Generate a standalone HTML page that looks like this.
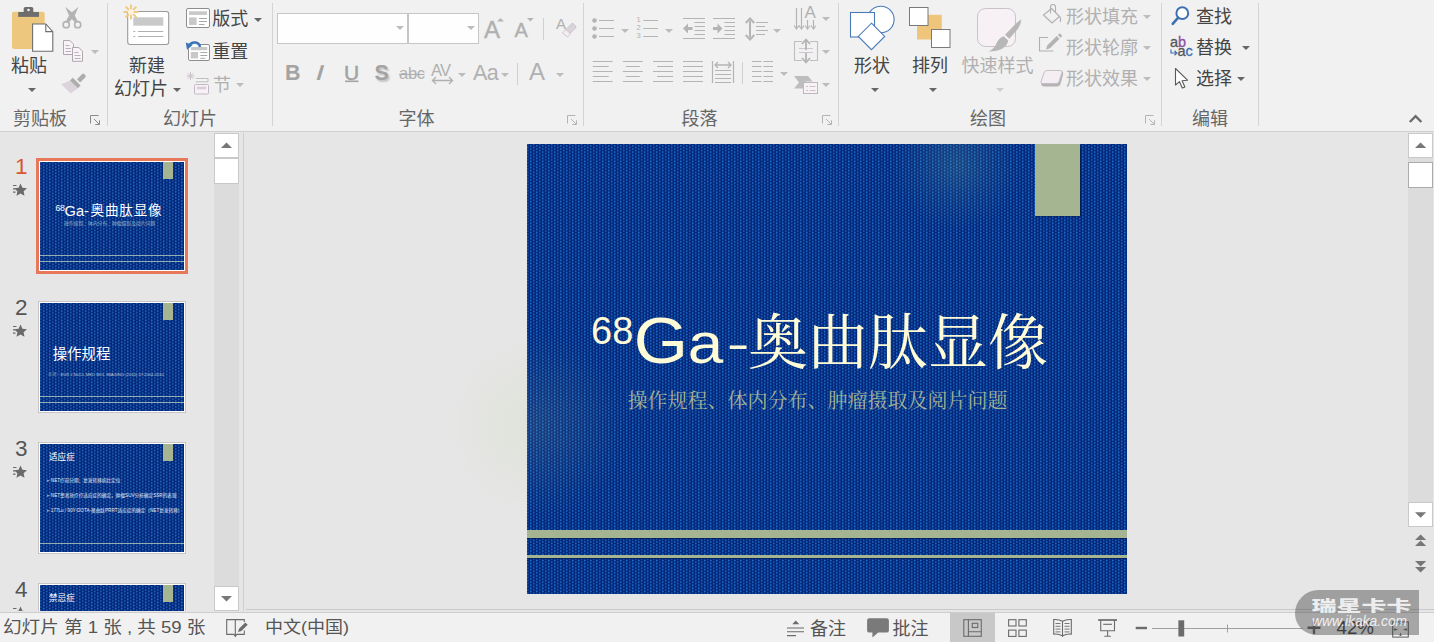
<!DOCTYPE html>
<html lang="zh-CN">
<head>
<meta charset="utf-8">
<title>PowerPoint</title>
<style>
html,body{margin:0;padding:0}
body{width:1434px;height:642px;position:relative;overflow:hidden;background:#e6e6e6;font-family:"Liberation Sans","Noto Sans CJK SC",sans-serif;color:#444}
.a{position:absolute}
.t{position:absolute;white-space:nowrap;font-size:18px;line-height:18px;color:#444}
.g{color:#b0b0b0}
.gl{color:#666}
svg{position:absolute;overflow:visible}
#ribbon{left:0;top:0;width:1434px;height:131px;background:#f1f1f1;border-bottom:1px solid #d0d0d0}
.sep{position:absolute;top:3px;width:1px;height:123px;background:#d4d4d4}
.ssep{position:absolute;width:1px;background:#d0d0d0}
.dd{position:absolute;width:0;height:0;border-left:4px solid transparent;border-right:4px solid transparent;border-top:4px solid #666}
.dd.g{border-top-color:#bcbcbc}
.box{position:absolute;background:#fefefe;border:1px solid #c6c6c6;box-sizing:border-box}
.dots{background-color:#03277a;background-image:radial-gradient(circle at 3.7px 1.9px,#1d6ecb 0.5px,rgba(29,110,203,0) 1.28px),radial-gradient(circle at 0.7px 0.35px,#2361b1 0.5px,rgba(35,97,177,0) 1.28px),radial-gradient(circle at 0.7px 3.45px,#2361b1 0.5px,rgba(35,97,177,0) 1.28px),radial-gradient(circle at 6.7px 0.35px,#2361b1 0.5px,rgba(35,97,177,0) 1.28px),radial-gradient(circle at 6.7px 3.45px,#2361b1 0.5px,rgba(35,97,177,0) 1.28px);background-size:6px 3.1px}
.sbtn{position:absolute;background:#fff;border:1px solid #c9c9c9;box-sizing:border-box}
</style>
</head>
<body>
<!-- RIBBON -->
<div id="ribbon" class="a">
<svg class="a" style="left:0;top:0" width="1434" height="131" viewBox="0 0 1434 131">
<!-- paste -->
<rect x="12" y="11.7" width="32.7" height="37.3" rx="2" fill="#edc77d"/>
<rect x="18.2" y="12" width="20.8" height="4.9" fill="#6d6d6d"/>
<path d="M23.7 12.5V8.6q0-1.6 1.6-1.6h6.4q1.6 0 1.6 1.6V12.5Z" fill="#6d6d6d"/>
<circle cx="28.5" cy="10" r="1.3" fill="#f1f1f1"/>
<path d="M32.6 24h13.2l7 7.6V51.3H32.6Z" fill="#fff" stroke="#6e6e6e" stroke-width="1.1"/>
<path d="M45.8 24v7.6h7" fill="none" stroke="#6e6e6e" stroke-width="1.1"/>
<!-- scissors -->
<g fill="none" stroke="#b3b3b3" stroke-width="1.6">
<circle cx="66.2" cy="24.7" r="3.1"/><circle cx="77.7" cy="24.7" r="3.1"/>
</g>
<path d="M65.200 6.800L73.700 13.800 77.500 20.400 74.800 22.300 69.500 16.500Z" fill="#b3b3b3"/><path d="M78.600 6.800L70.100 13.800 66.300 20.400 69 22.300 74.300 16.500Z" fill="#b3b3b3"/>
<!-- copy -->
<g fill="#f7f3f7" stroke="#afa9af" stroke-width="1">
<path d="M63.5 40.5h6.3l3.7 3.7V54.5H63.5Z"/>
<path d="M72.5 47.5h6.3l3.7 3.7V61.3H72.5Z"/>
</g>
<g stroke="#b9b2b9" stroke-width="1" fill="none">
<path d="M65.5 45.5h4M65.5 48.5h5.5M65.5 51.5h5.5M74.5 52.5h4M74.5 55.5h6M74.5 58.5h6"/>
</g>
<!-- format painter -->
<path d="M70 80.500L61.200 84.200 70.600 93.500 77.800 88.300Z" fill="#dbd4da"/>
<path d="M72.800 77.700l7.800 7.800-2.800 2.800-7.800-7.800Z" fill="#adadad"/>
<path d="M77 79.200l5-5q1.200-1.200 2.400 0l0.800 0.800q1.200 1.200 0 2.400l-5 5Z" fill="#adadad"/>
<!-- launcher clipboard -->
<g fill="none" stroke="#8a8a8a" stroke-width="1">
<path d="M90.5 123.5v-8h8"/><path d="M94 119l5.2 5.2M99.5 120.3v4.2h-4.2"/>
</g>
<!-- new slide -->
<rect x="127.700" y="11.500" width="41" height="33" rx="2.500" fill="#fff" stroke="#9a9a9a" stroke-width="1.1"/>
<rect x="133.3" y="17.3" width="30" height="8.4" fill="#c9c9c9"/>
<g stroke="#b0b0b0" stroke-width="1"><path d="M133.3 31.5h2M138 31.5h25.3M133.3 36.5h2M138 36.5h25.3"/></g>
<g stroke="#efcb85" stroke-width="2" fill="none"><path d="M131 4.500v15M123.500 12h15M125.700 6.700l10.600 10.600M136.300 6.700l-10.600 10.600"/></g>
<circle cx="131" cy="12" r="3" fill="#fbf3df"/>
<!-- layout -->
<rect x="186.500" y="8.5" width="23" height="19" rx="1.5" fill="#fff" stroke="#8d8d8d" stroke-width="1"/>
<rect x="189" y="11.3" width="18" height="3.6" fill="#c8c8c8"/>
<rect x="189" y="17.400" width="7.6" height="7.600" fill="#c8c8c8"/>
<g stroke="#a8a8a8" stroke-width="1"><path d="M199 18.500h8M199 21.500h8M199 24.500h5.500"/></g>
<!-- reset -->
<rect x="188.5" y="44.5" width="21" height="16" rx="1.500" fill="#fff" stroke="#8d8d8d" stroke-width="1"/>
<rect x="190.8" y="47" width="16.500" height="3.200" fill="#c8c8c8"/>
<rect x="190.800" y="52" width="7.3" height="6.4" fill="#c8c8c8"/>
<g stroke="#a8a8a8" stroke-width="1"><path d="M200.300 52.500h7M200.300 55.500h7M200.300 58.300h5"/></g>
<path d="M189.200 48.600V43.200h9.500" fill="none" stroke="#f1f1f1" stroke-width="4"/>
<path d="M200 47c-0.800-5-8.200-6.300-11-1.200" fill="none" stroke="#3c73b7" stroke-width="2.500"/>
<path d="M185.800 42.600l6.800 2.300-5.600 4.800Z" fill="#3c73b7"/>
<!-- section (disabled) -->
<g stroke="#c9c2c9" stroke-width="1" fill="none"><path d="M190.500 72v8M186.500 76h8M187.700 73.200l5.600 5.600M193.300 73.200l-5.600 5.600"/></g>
<path d="M195.800 78.500h12.200v3.300h-12.200" fill="#f4f4f4" stroke="#bdbdbd" stroke-width="1"/>
<rect x="194.500" y="84.500" width="14" height="9.5" rx="1" fill="#f7f0f6" stroke="#c3b9c2" stroke-width="1"/>
<rect x="197" y="86.700" width="9" height="2.600" fill="#d9cdd8"/>
</svg>
<div class="t" style="left:11px;top:57px">粘贴</div>
<div class="dd" style="left:28px;top:87.500px"></div>
<div class="dd g" style="left:91px;top:50px"></div>
<div class="t gl" style="left:13px;top:109.700px">剪贴板</div>
<div class="sep" style="left:107px"></div>
<div class="t" style="left:129px;top:57px">新建</div>
<div class="t" style="left:114px;top:79.500px">幻灯片</div>
<div class="dd" style="left:173px;top:87.500px"></div>
<div class="t" style="left:212.300px;top:10px">版式</div>
<div class="dd" style="left:254px;top:17.600px"></div>
<div class="t" style="left:212.300px;top:43px">重置</div>
<div class="t g" style="left:213px;top:75.500px">节</div>
<div class="dd g" style="left:236px;top:83px"></div>
<div class="t gl" style="left:163px;top:109.700px">幻灯片</div>
<div class="sep" style="left:272px"></div>
<!-- FONT GROUP -->
<div class="box" style="left:277px;top:13px;width:131px;height:31px"></div>
<div class="box" style="left:408px;top:13px;width:71px;height:31px"></div>
<div class="dd g" style="left:395.800px;top:26px"></div>
<div class="dd g" style="left:466.800px;top:26px"></div>
<div class="t g" style="left:484px;top:17.300px;font-size:24px;line-height:25px;-webkit-text-stroke:0.400px #b0b0b0">A</div>
<div class="t g" style="left:514.500px;top:19.600px;font-size:20px;line-height:21px;-webkit-text-stroke:0.400px #b0b0b0">A</div>
<div class="ssep" style="left:543px;top:18px;height:22px"></div>
<div class="t g" style="left:556px;top:16px;font-size:15px;line-height:15px">A</div>
<div class="t" style="left:285px;top:61.500px;font-size:21.500px;line-height:22px;font-weight:bold;color:#a3a3a3">B</div>
<div class="t" style="left:317px;top:61.500px;font-size:21.500px;line-height:22px;font-style:italic;font-weight:bold;color:#a3a3a3;transform:skewX(-6deg)">I</div>
<div class="t" style="left:344px;top:61.500px;font-size:21px;line-height:22px;color:#a3a3a3;-webkit-text-stroke:0.500px #a3a3a3">U</div>
<div class="t" style="left:374.500px;top:61.500px;font-size:21.500px;line-height:22px;font-weight:bold;color:#a3a3a3;text-shadow:1.500px 1.500px 1.500px #c4c4c4">S</div>
<div class="t g" style="left:399px;top:63px;font-size:16.500px;line-height:20px;letter-spacing:-0.300px">abc</div>
<div class="t g" style="left:431px;top:60.500px;font-size:16.500px;line-height:18px;letter-spacing:-0.800px">AV</div>
<div class="dd g" style="left:458px;top:72.500px"></div>
<div class="t g" style="left:473px;top:62px;font-size:21.500px;line-height:22px;letter-spacing:-0.700px">Aa</div>
<div class="dd g" style="left:501px;top:72.500px"></div>
<div class="ssep" style="left:517px;top:63px;height:22px"></div>
<div class="t g" style="left:529px;top:59.500px;font-size:24px;line-height:24px">A</div>
<div class="dd g" style="left:556px;top:72.500px"></div>
<div class="t gl" style="left:398.500px;top:109.700px">字体</div>
<div class="sep" style="left:583px"></div>
<svg class="a" style="left:0;top:0" width="1434" height="131" viewBox="0 0 1434 131">
<path d="M497 21.600l3.500-3.600 3.500 3.600Z" fill="#b5b5b5"/>
<path d="M527 18l3.400 3.600 3.400-3.600Z" fill="#b5b5b5"/>
<path d="M345 81.300h13.500" stroke="#a3a3a3" stroke-width="1.600"/>
<path d="M399 74.500h25.500" stroke="#b0b0b0" stroke-width="1.200"/>
<g stroke="#b0b0b0" stroke-width="1.300" fill="none"><path d="M432.500 80.500h20M436 77l-3.500 3.500 3.500 3.500M449 77l3.500 3.500-3.500 3.500"/></g>
<!-- eraser -->
<path d="M566 29.500l6.500-6.500 3 3q1 1 0 2l-5.500 5.500q-1 1-2 0Z" fill="#dad3d9" stroke="#c3bdc3" stroke-width="0.800"/>
<path d="M562.500 33l3.500-3.500 4.500 4.500-2.200 2.200q-1 1-2 0Z" fill="#f3eef3" stroke="#c3bdc3" stroke-width="0.800"/>
<!-- launcher font -->
<g fill="none" stroke="#b4b4b4" stroke-width="1"><path d="M567.500 123.500v-8h8"/><path d="M571 119l5.200 5.200M576.500 120.300v4.200h-4.200"/></g>
<!-- PARAGRAPH -->
<g fill="#b4b4b4"><circle cx="594.500" cy="20.500" r="2.300"/><circle cx="594.500" cy="28.500" r="2.300"/><circle cx="594.500" cy="36.500" r="2.300"/></g>
<g stroke="#b4b4b4" stroke-width="1.200" fill="none">
<path d="M599 20.500h15M599 28.500h15M599 36.500h15"/>
<path d="M643.300 20.500h14.700M643.300 28.500h14.700M643.300 36.500h14.700"/>
<!-- dec indent -->
<path d="M683 18.500h22M683 38.500h22M694.500 22.500h10.500M694.500 26.500h10.500M694.500 30.500h10.500M694.500 34.500h10.500"/>
<!-- inc indent -->
<path d="M713 18.500h22M713 38.500h22M724.500 22.500h10.500M724.500 26.500h10.500M724.500 30.500h10.500M724.500 34.500h10.500"/>
<!-- line spacing -->
<path d="M756 22.500h12M756 26.500h9M756 30.500h12M756 34.500h9"/>
<!-- align left -->
<path d="M592.700 61.500h20M592.700 66.500h16M592.700 71.500h20M592.700 76.500h16M592.700 81.500h20"/>
<!-- center -->
<path d="M622.800 61.500h20M625.800 66.500h14M622.800 71.500h20M625.800 76.500h14M622.800 81.500h20"/>
<!-- right -->
<path d="M653 61.500h20M657 66.500h16M653 71.500h20M657 76.500h16M653 81.500h20"/>
<!-- justify -->
<path d="M683 61.500h20M683 66.500h20M683 71.500h20M683 76.500h20M683 81.500h20"/>
<!-- distribute -->
<path d="M712.500 61v22M733.500 61v22M715 70.500h16M715 74.500h16M715 78.500h16M715 82.500h16"/>
<path d="M715 65h16M718 62l-3 3 3 3M728 62l3 3-3 3" stroke-width="1.300"/>
<!-- columns -->
<path d="M752 61.500h9.500M763.500 61.500h9.500M752 66.500h9.500M763.500 66.500h9.500M752 71.500h9.500M763.500 71.500h9.500M752 76.500h9.500M763.500 76.500h9.500M752 81.500h9.500M763.500 81.500h9.500"/>
<!-- text direction -->
<path d="M796.500 8v20M801.500 8v20M807.500 20v8M813.500 20v8" stroke-width="1.200"/>
<path d="M794 25.500l2.500 3.500 2.500-3.500M799 25.500l2.500 3.500 2.500-3.500M805 25.500l2.500 3.500 2.500-3.500M811 25.500l2.500 3.500 2.500-3.500" stroke-width="1.100"/>
<!-- align text -->
<path d="M802 41.500h-7.500v19h7.500M810 41.500h7.500v19h-7.500" stroke="#c4bcc4" stroke-width="1.100"/>
<path d="M799 48.500h14M799 52.500h14" stroke="#cfc6cf" stroke-width="1"/>
</g>
<path d="M806 50v-9M806 53v9" stroke="#b4b4b4" stroke-width="1.800" fill="none"/>
<path d="M802 44l4-4.500 4 4.500M802 58l4 4.500 4-4.500" stroke="#b4b4b4" stroke-width="1.800" fill="none"/>
<!-- indent arrows -->
<path d="M683 28.500l5-5v3.500h4.500v3h-4.500v3.500Z" fill="#b4b4b4"/>
<path d="M722.500 28.500l-5-5v3.500h-4.500v3h4.500v3.500Z" fill="#b4b4b4"/>
<!-- line spacing arrows -->
<path d="M750 20.500v17" stroke="#b4b4b4" stroke-width="2" fill="none"/>
<path d="M745.800 23l4.200-4.600 4.200 4.600M745.800 35l4.200 4.600 4.200-4.600" stroke="#b4b4b4" stroke-width="2" fill="none"/>
<!-- smartart -->
<path d="M794 76h14l4.500 5.500H806v7h-12l5-6Z" fill="#bdbdbd"/>
<rect x="803.500" y="82.500" width="14" height="11" fill="#f8f2f7" stroke="#c0b6bf" stroke-width="1"/>
<path d="M806 86.500h2M809.500 86.500h6M806 90.500h2M809.500 90.500h6" stroke="#cbbfca" stroke-width="1"/>
<!-- launcher para -->
<g fill="none" stroke="#b4b4b4" stroke-width="1"><path d="M822.500 123.500v-8h8"/><path d="M826 119l5.200 5.200M831.500 120.300v4.200h-4.200"/></g>
</svg>
<div class="t g" style="left:636px;top:16px;font-size:7.500px;line-height:8px;width:5px;white-space:normal;text-align:center">1 2 3</div>
<div class="t g" style="left:804.500px;top:4px;font-size:17px;line-height:17px">A</div>
<div class="dd g" style="left:621px;top:28.500px"></div>
<div class="dd g" style="left:665px;top:28.500px"></div>
<div class="dd g" style="left:773px;top:28.500px"></div>
<div class="dd g" style="left:779.500px;top:71.500px"></div>
<div class="ssep" style="left:742px;top:62px;height:22px"></div>
<div class="dd g" style="left:822px;top:17.300px"></div>
<div class="dd g" style="left:822px;top:50px"></div>
<div class="dd g" style="left:822px;top:83px"></div>
<div class="t gl" style="left:681.500px;top:109.700px">段落</div>
<div class="sep" style="left:838px"></div>
<!-- DRAWING -->
<svg class="a" style="left:0;top:0" width="1434" height="131" viewBox="0 0 1434 131">
<circle cx="880.800" cy="19.500" r="13.300" fill="#fff" stroke="#4a7ab8" stroke-width="1.100"/>
<rect x="850.500" y="12.500" width="24" height="24.500" fill="#fff" stroke="#4a7ab8" stroke-width="1.100"/>
<path d="M871.500 23.200l13.200 13.200-13.200 13.200-13.200-13.200Z" fill="#fff" stroke="#4a7ab8" stroke-width="1.100"/>
<!-- arrange -->
<rect x="917" y="14.800" width="24.800" height="24.700" fill="#eec57a"/>
<rect x="909.500" y="7.500" width="18.500" height="18" fill="#fff" stroke="#7a7a7a" stroke-width="1"/>
<rect x="931.500" y="29.500" width="18.500" height="18" fill="#fff" stroke="#7a7a7a" stroke-width="1"/>
<!-- quick styles -->
<rect x="977.500" y="8.500" width="38" height="38" rx="8" fill="#f7f1f6" stroke="#c9c3c9" stroke-width="1"/>
<path d="M1021.400 19.200q-0.400 5.500-3.400 9.600l-8.700 10-4.300-4 9.600-9.800q3.200-3.400 6.800-5.800Z" fill="#b7b7b7"/>
<path d="M1003.600 36.200l4.600 4.400q-0.600 4.600-5.600 7.800-5 2.800-14.200 3 5.400-2.400 7.200-6.200 2.600-7.200 8-9Z" fill="#b7b7b7"/>
<!-- shape fill -->
<g fill="none" stroke="#b0b0b0" stroke-width="1.100">
<path d="M1051.500 8.500l8 8-7.500 6.500-8.500-8Z"/>
<path d="M1050.500 13.500v-6.500q0-2.500 2.500-2.500t2.500 2.500v5"/>
<path d="M1059.500 16q2 3 0.500 6"/>
<!-- shape outline -->
<path d="M1048 37.500h-8.500v13.500h14"/>
</g>
<path d="M1046 49.500l1.200-4 9.500-9.500 2.800 2.800-9.500 9.500Z M1057.800 34.900l1-1q0.800-0.800 1.600 0l1.200 1.200q0.800 0.800 0 1.600l-1 1Z" fill="#b3b3b3"/>
<!-- shape effects -->
<path d="M1041 83q0.300 3.600 3.200 3.600h12.800q2.700 0 3.500-2.600l2.700-9.700q0.300-2.600-1.200-3.300l-4 11.500Z" fill="#b5b5b5"/>
<path d="M1047 70.500h13.500q2 0 1.500 2l-3 9q-0.600 2-2.600 2h-14q-2 0-1.400-2l3.200-9q0.800-2 2.800-2Z" fill="#f4eef3" stroke="#c6c0c6" stroke-width="1"/>
<!-- launcher -->
<g fill="none" stroke="#b4b4b4" stroke-width="1"><path d="M1145.500 123.500v-8h8"/><path d="M1149 119l5.200 5.200M1154.500 120.300v4.200h-4.200"/></g>
<!-- EDITING -->
<circle cx="1182.300" cy="13.200" r="5.900" fill="#fdfdfd" stroke="#3d70b2" stroke-width="2"/>
<path d="M1178 17.800l-5.300 6" stroke="#3d70b2" stroke-width="2.600" stroke-linecap="round"/>
<!-- select cursor -->
<path d="M1175.500 68.500v16.500l4-3.300 2.800 6.300 2.600-1.100-2.800-6.200 5.400-0.500Z" fill="#fff" stroke="#5a5a5a" stroke-width="1.100" stroke-linejoin="round"/>
<!-- replace small arrow -->
<path d="M1171 49.500v3.500h5.500M1174.500 50.800l2.300 2.200-2.300 2.200" fill="none" stroke="#3d70b2" stroke-width="1.200"/>
<!-- caret -->
<path d="M1409.800 122l5.800-5.800 5.800 5.800" fill="none" stroke="#6a6a6a" stroke-width="2.300"/>
</svg>
<div class="t" style="left:854px;top:57px">形状</div>
<div class="dd" style="left:871px;top:87.500px"></div>
<div class="t" style="left:912px;top:57px">排列</div>
<div class="dd" style="left:929px;top:87.500px"></div>
<div class="t g" style="left:961.500px;top:57px">快速样式</div>
<div class="dd g" style="left:996px;top:87.500px;border-top-color:#cdcdcd"></div>
<div class="t g" style="left:1066px;top:7.500px">形状填充</div>
<div class="dd g" style="left:1143px;top:15px"></div>
<div class="t g" style="left:1066px;top:38.500px">形状轮廓</div>
<div class="dd g" style="left:1143px;top:46.200px"></div>
<div class="t g" style="left:1066px;top:69.500px">形状效果</div>
<div class="dd g" style="left:1143px;top:77px"></div>
<div class="t gl" style="left:970px;top:109.700px">绘图</div>
<div class="sep" style="left:1161px"></div>
<div class="t" style="left:1196px;top:7.500px">查找</div>
<div class="t" style="left:1196px;top:38.500px">替换</div>
<div class="dd" style="left:1242px;top:46.200px"></div>
<div class="t" style="left:1196px;top:69.500px">选择</div>
<div class="dd" style="left:1237px;top:77px"></div>
<div class="t" style="left:1170px;top:35px;font-size:14.500px;line-height:15px;color:#555;-webkit-text-stroke:0.300px">a<span style="color:#8a4f9e">b</span></div>
<div class="t" style="left:1177.500px;top:44px;font-size:14.500px;line-height:15px;color:#555;-webkit-text-stroke:0.300px">a<span style="color:#3d70b2">c</span></div>
<div class="t gl" style="left:1192px;top:109.700px">编辑</div>
<div class="sep" style="left:1258px"></div>
<!--RIBBON-CONTENT-->
</div>

<!-- THUMBNAIL PANEL -->
<div id="panel" class="a" style="left:0;top:131px;width:243px;height:481px">
<div class="a" style="left:214px;top:2px;width:25px;height:477px;background:#dcdcdc"></div>
<div class="sbtn" style="left:214px;top:2px;width:25px;height:25px"></div>
<div class="sbtn" style="left:214px;top:27px;width:25px;height:26px"></div>
<div class="sbtn" style="left:214px;top:455px;width:25px;height:25px"></div>
<svg class="a" style="left:0;top:0" width="243" height="481" viewBox="0 131 243 481">
<path d="M221 148l5.500-5.500 5.500 5.500Z" fill="#777"/>
<path d="M221 596l5.500 5.500 5.500-5.500Z" fill="#777"/>
<g fill="#6a6a6a" transform="translate(0 0)"><path d="M20.500 183.500l1.900 4.200 4.600 0.500-3.400 3.100 0.900 4.500-4-2.300-4 2.300 0.900-4.500-3.400-3.100 4.600-0.500Z"/><path d="M13 185h3.500v1.100H13ZM13 188.300h2v1.100h-2ZM13 191.600h2.500v1.100H13Z"/></g>
<g fill="#6a6a6a" transform="translate(0 141)"><path d="M20.500 183.500l1.900 4.200 4.600 0.500-3.400 3.100 0.900 4.500-4-2.300-4 2.300 0.900-4.500-3.400-3.100 4.600-0.500Z"/><path d="M13 185h3.500v1.100H13ZM13 188.300h2v1.100h-2ZM13 191.600h2.500v1.100H13Z"/></g>
<g fill="#6a6a6a" transform="translate(0 282)"><path d="M20.500 183.500l1.900 4.200 4.600 0.500-3.400 3.100 0.900 4.500-4-2.300-4 2.300 0.900-4.500-3.400-3.100 4.600-0.500Z"/><path d="M13 185h3.500v1.100H13ZM13 188.300h2v1.100h-2ZM13 191.600h2.500v1.100H13Z"/></g>
<g fill="#6a6a6a" transform="translate(0 423)"><path d="M20.500 183.500l1.900 4.200 4.600 0.500-3.400 3.100 0.900 4.500-4-2.300-4 2.300 0.900-4.500-3.400-3.100 4.600-0.500Z"/><path d="M13 185h3.500v1.100H13ZM13 188.300h2v1.100h-2ZM13 191.600h2.500v1.100H13Z"/></g>
</svg>
<div class="t" style="left:15px;top:24px;font-size:22.500px;line-height:24px;color:#d9572f">1</div>
<div class="t" style="left:15px;top:165px;font-size:22.500px;line-height:24px;color:#555">2</div>
<div class="t" style="left:15px;top:306px;font-size:22.500px;line-height:24px;color:#555">3</div>
<div class="t" style="left:15px;top:447px;font-size:22.500px;line-height:24px;color:#555">4</div>
<!-- thumb 1 -->
<div class="a" style="left:36px;top:27px;width:152px;height:116px;background:#fff;border:3px solid #e8785a;box-sizing:border-box"></div>
<div class="a dots th" style="left:40px;top:31px;width:144px;height:108px;overflow:hidden">
<div class="a" style="left:122.500px;top:0;width:10.500px;height:17px;background:#a5b592"></div>
<div class="a" style="left:0;top:93px;width:144px;height:1px;background:#93aeb2"></div>
<div class="a" style="left:0;top:99px;width:144px;height:1px;background:#93aeb2"></div>
<div class="t" style="left:15.500px;top:37.500px;font-size:14.700px;line-height:16px;color:#fff"><span style="font-size:8.800px;vertical-align:4.500px;letter-spacing:-0.400px">68</span>Ga-<span style="font-size:13.600px;letter-spacing:0.800px;margin-left:1.500px">奥曲肽显像</span></div>
<div class="t" style="left:24px;top:58.500px;font-size:4.800px;line-height:6px;color:#93b0c2">操作规程、体内分布、肿瘤摄取及阅片问题</div>
</div>
<!-- thumb 2 -->
<div class="a" style="left:38px;top:170px;width:148px;height:112px;background:#fff;border:1px solid #c6c6c6;box-sizing:border-box"></div>
<div class="a dots th" style="left:40px;top:172px;width:144px;height:108px;overflow:hidden">
<div class="a" style="left:122.500px;top:0;width:10.500px;height:17px;background:#a5b592"></div>
<div class="a" style="left:0;top:93px;width:144px;height:1px;background:#93aeb2"></div>
<div class="a" style="left:0;top:99px;width:144px;height:1px;background:#93aeb2"></div>
<div class="t" style="left:12.800px;top:43px;font-size:14.400px;line-height:16px;color:#fff">操作规程</div>
<div class="t" style="left:8px;top:68.500px;font-size:4.150px;line-height:5px;color:#b9cbd8"><span style="color:#7d9db5">來源：</span>EUR J NUCL MED MOL IMAGING (2010) 37:2004-2010</div>
</div>
<!-- thumb 3 -->
<div class="a" style="left:38px;top:311px;width:148px;height:112px;background:#fff;border:1px solid #c6c6c6;box-sizing:border-box"></div>
<div class="a dots th" style="left:40px;top:313px;width:144px;height:108px;overflow:hidden">
<div class="a" style="left:122.500px;top:0;width:10.500px;height:17px;background:#a5b592"></div>
<div class="a" style="left:0;top:99px;width:144px;height:1px;background:#93aeb2"></div>
<div class="t" style="left:9px;top:7.800px;font-size:8.600px;line-height:10px;color:#fff">适应症</div>
<div class="t" style="left:6.500px;top:33.500px;font-size:4.650px;line-height:6px;color:#e4ecf4"><span style="color:#8fb0c8">▸</span> NET疗前分期、复发转移病灶定位</div>
<div class="t" style="left:6.500px;top:48.500px;font-size:4.650px;line-height:6px;color:#e4ecf4"><span style="color:#8fb0c8">▸</span> NET患者放疗疗适应症的确定，肿瘤SUV分析确定SSR的表现</div>
<div class="t" style="left:6.500px;top:63.500px;font-size:4.650px;line-height:6px;color:#e4ecf4"><span style="color:#8fb0c8">▸</span> 177Lu / 90Y-DOTA-奥曲肽PRRT适应症的确定（NET复发转移）</div>
</div>
<!-- thumb 4 -->
<div class="a" style="left:38px;top:452px;width:148px;height:112px;background:#fff;border:1px solid #c6c6c6;box-sizing:border-box"></div>
<div class="a dots th" style="left:40px;top:454px;width:144px;height:108px;overflow:hidden">
<div class="a" style="left:122.500px;top:0;width:10.500px;height:17px;background:#a5b592"></div>
<div class="t" style="left:9px;top:7.800px;font-size:8.600px;line-height:10px;color:#fff">禁忌症</div>
</div>
<!--PANEL-CONTENT-->
</div>
<div class="a" style="left:243px;top:133px;width:1px;height:478px;background:#cfcfcf"></div>

<div class="a" style="left:246px;top:609px;width:1188px;height:1px;background:#c9c9c9"></div>
<!-- MAIN SLIDE -->
<div id="slide" class="a dots" style="left:527px;top:144px;width:600px;height:450px;overflow:hidden">
<div class="a" style="left:508px;top:0;width:45px;height:72px;background:#a5b592;box-shadow:0.500px 1px 1px rgba(0,15,50,0.600)"></div>
<div class="a" style="left:0;top:386px;width:600px;height:8px;background:#a5b592;box-shadow:0 1px 0 rgba(0,20,60,0.550)"></div>
<div class="a" style="left:0;top:410.500px;width:600px;height:3.500px;background:#a5b592;box-shadow:0 1px 0 rgba(0,20,60,0.550)"></div>
<div class="t" style="left:64px;top:166.500px;font-size:38px;line-height:40px;color:#fffbd6">68</div>
<div class="t" style="left:107px;top:164.600px;font-size:64px;line-height:64px;color:#fffbd6;transform-origin:3px 0;transform:scaleX(1.09)">G</div>
<div class="t" style="left:160.500px;top:167.400px;font-size:58px;line-height:64px;color:#fffbd6;transform-origin:3px 0;transform:scaleX(1.1)">a</div>
<div class="t" style="left:199.500px;top:166px;font-size:61px;line-height:64px;color:#fffbd6;transform-origin:3px 38px;transform:scale(1.12,0.72)">-</div>
<div class="t" style="left:221px;top:170px;font-size:60px;line-height:60px;color:#fffbd6;font-family:'Liberation Serif','Noto Serif CJK SC',serif">奥曲肽显像</div>
<div class="t" style="left:100.500px;top:247px;font-size:20px;line-height:20px;color:#a3b294;font-family:'Liberation Serif','Noto Serif CJK SC',serif">操作规程、体内分布、肿瘤摄取及阅片问题</div>
<!--SLIDE-CONTENT-->
</div>

<div class="a" style="left:447px;top:335px;width:180px;height:180px;background:radial-gradient(circle closest-side,rgba(175,200,130,0.130),rgba(175,200,130,0.060) 55%,rgba(175,200,130,0));pointer-events:none"></div>
<div class="a" style="left:892px;top:100px;width:130px;height:130px;background:radial-gradient(circle closest-side,rgba(120,185,150,0.200),rgba(120,185,150,0.080) 55%,rgba(120,185,150,0));pointer-events:none;clip-path:inset(44px 0 0 0)"></div>
<!-- RIGHT SCROLLBAR -->
<div id="vscroll" class="a" style="left:1408px;top:133px;width:25px;height:394px;background:#dcdcdc">
<div class="sbtn" style="left:0;top:0;width:25px;height:25px"></div>
<div class="sbtn" style="left:0;top:29px;width:25px;height:26px;border-color:#ababab"></div>
<div class="sbtn" style="left:0;top:369px;width:25px;height:25px"></div>
<svg class="a" style="left:0;top:0" width="25" height="460" viewBox="1408 133 25 460">
<path d="M1415 148l5.600-5.600 5.600 5.600Z" fill="#777"/>
<path d="M1415 512.200l5.600 5.600 5.600-5.600Z" fill="#777"/>
<path d="M1415 540l5.600-5.600 5.600 5.600ZM1415 546l5.600-5.600 5.600 5.600Z" fill="#777"/>
<path d="M1415 561l5.600 5.600 5.600-5.600ZM1415 567l5.600 5.600 5.600-5.600Z" fill="#777"/>
</svg>
<!--VSCROLL-CONTENT-->
</div>

<!-- STATUS BAR -->
<div id="status" class="a" style="left:0;top:611px;width:1434px;height:31px;background:linear-gradient(#e6e6e6 0,#e6e6e6 1px,#cdcdcd 1px,#cdcdcd 2px,#f1f1f1 2px)">
<div class="t" style="left:2.500px;top:7.500px;font-size:17px;line-height:18px;color:#555;transform-origin:0 0;transform:scaleX(1.093)">幻灯片 第 1 张 , 共 59 张</div>
<div class="t" style="left:265px;top:7.500px;font-size:17px;line-height:18px;color:#555;transform-origin:0 0;transform:scaleX(1.060)">中文(中国)</div>
<div class="a" style="left:950px;top:2px;width:44.500px;height:29px;background:#c8c8c8"></div>
<div class="t" style="left:810px;top:8.700px;font-size:18px;line-height:18px;color:#555">备注</div>
<div class="t" style="left:892.500px;top:8.700px;font-size:18px;line-height:18px;color:#555">批注</div>
<div class="t" style="left:1336.500px;top:7px;font-size:18.700px;line-height:19px;color:#4a4a4a">42%</div>
<svg class="a" style="left:0;top:0" width="1434" height="31" viewBox="0 611 1434 31">
<g fill="none" stroke="#6b6b6b" stroke-width="1.100">
<!-- spell/notes book icon -->
<path d="M235.300 619.600H226.700V634.400H233.800L235.300 636.400 236.800 634.400H244.300V630.500M235.300 619.600V636M235.300 619.600H244.300V622"/>
<path d="M238 632l1-3.300 6.300-6.300 2.400 2.400-6.300 6.300Z" fill="#6b6b6b" stroke="none"/>
<!-- notes icon -->
<path d="M787 628h17M787 631.800h17M787 635.600h9"/>
<path d="M792.300 624.300l3.500-3.700 3.500 3.700Z" fill="#6b6b6b" stroke="none"/>
<!-- normal view -->
<rect x="963.800" y="619.700" width="17.500" height="16.600"/>
<path d="M968.400 619.700v16.600M968.400 631.800h13" />
<rect x="972.300" y="623.300" width="5.500" height="4.200"/>
<!-- sorter -->
<rect x="1008.600" y="619.700" width="7.400" height="6.300"/><rect x="1018.900" y="619.700" width="7.400" height="6.300"/>
<rect x="1008.600" y="630.100" width="7.400" height="6.300"/><rect x="1018.900" y="630.100" width="7.400" height="6.300"/>
<!-- reading -->
<path d="M1062.500 621.300q-4-2.200-8.800-1.700v14.500q4.800-0.500 8.800 1.700q4-2.200 8.800-1.700v-14.500q-4.800-0.500-8.800 1.700ZM1062.500 621.300v15.700"/>
<path d="M1055.500 623.500h5M1055.500 626.300h5M1055.500 629.100h5M1055.500 631.900h5M1064.500 623.500h5M1064.500 626.300h5M1064.500 629.100h5M1064.500 631.900h5" stroke-width="0.900"/>
<!-- slideshow -->
<path d="M1098.200 620h18.800" stroke-width="1.700"/>
<path d="M1100.700 620v10.700h13.800v-10.700M1107.600 630.700v5.600M1104.300 636.300h6.600"/>
<path d="M1103.200 624.300h8.800" />
<!-- zoom -->
<path d="M1135.700 628h11.300" stroke-width="2.400"/>
<path d="M1152 628.500h150.500" stroke="#a0a0a0" stroke-width="1"/>
<path d="M1227.500 624.500v8" stroke="#a0a0a0" stroke-width="1"/>
<path d="M1307.500 627.800h13M1314 621.400v12.800" stroke-width="2.400"/>
<!-- fit -->
<rect x="1392.700" y="621.900" width="15.600" height="15.200" stroke-width="1.100"/>
<path d="M1400.500 623v3M1400.500 633v3M1394 629.500h3.500M1403.500 629.500h3.500M1399 624.500l1.500-1.500 1.500 1.500M1399 634.500l1.500 1.500 1.500-1.500M1395.500 628l-1.500 1.500 1.500 1.500M1405.500 628l1.500 1.500-1.500 1.500" stroke-width="0.900"/>
</g>
<!-- comment icon -->
<path d="M869.300 618.200h17.400q2.200 0 2.200 2.200v10q0 2.200-2.200 2.200h-8.500l-5.800 5v-5h-3.100q-2.200 0-2.200-2.200v-10q0-2.200 2.200-2.200Z" fill="#7a7a7a"/>
<rect x="1178.400" y="620.300" width="5.800" height="16.200" fill="#6b6b6b"/>
</svg>
<!--STATUS-CONTENT-->
</div>
<div class="a" style="left:1295px;top:590px;width:124px;height:45px;background:rgba(46,46,46,0.380);border-radius:24px 0 0 22px"></div>
<div class="t" style="left:1311.500px;top:594.300px;font-size:25px;line-height:25px;color:rgba(255,255,255,0.820);font-weight:900;transform-origin:0 12px;transform:scale(1,0.610)">瑞星卡卡</div>
<div class="t" style="left:1312px;top:614.200px;font-size:13.800px;line-height:16px;color:rgba(255,255,255,0.850);font-style:italic">www.ikaka.com</div>
<!--WATERMARK-->
</body>
</html>
